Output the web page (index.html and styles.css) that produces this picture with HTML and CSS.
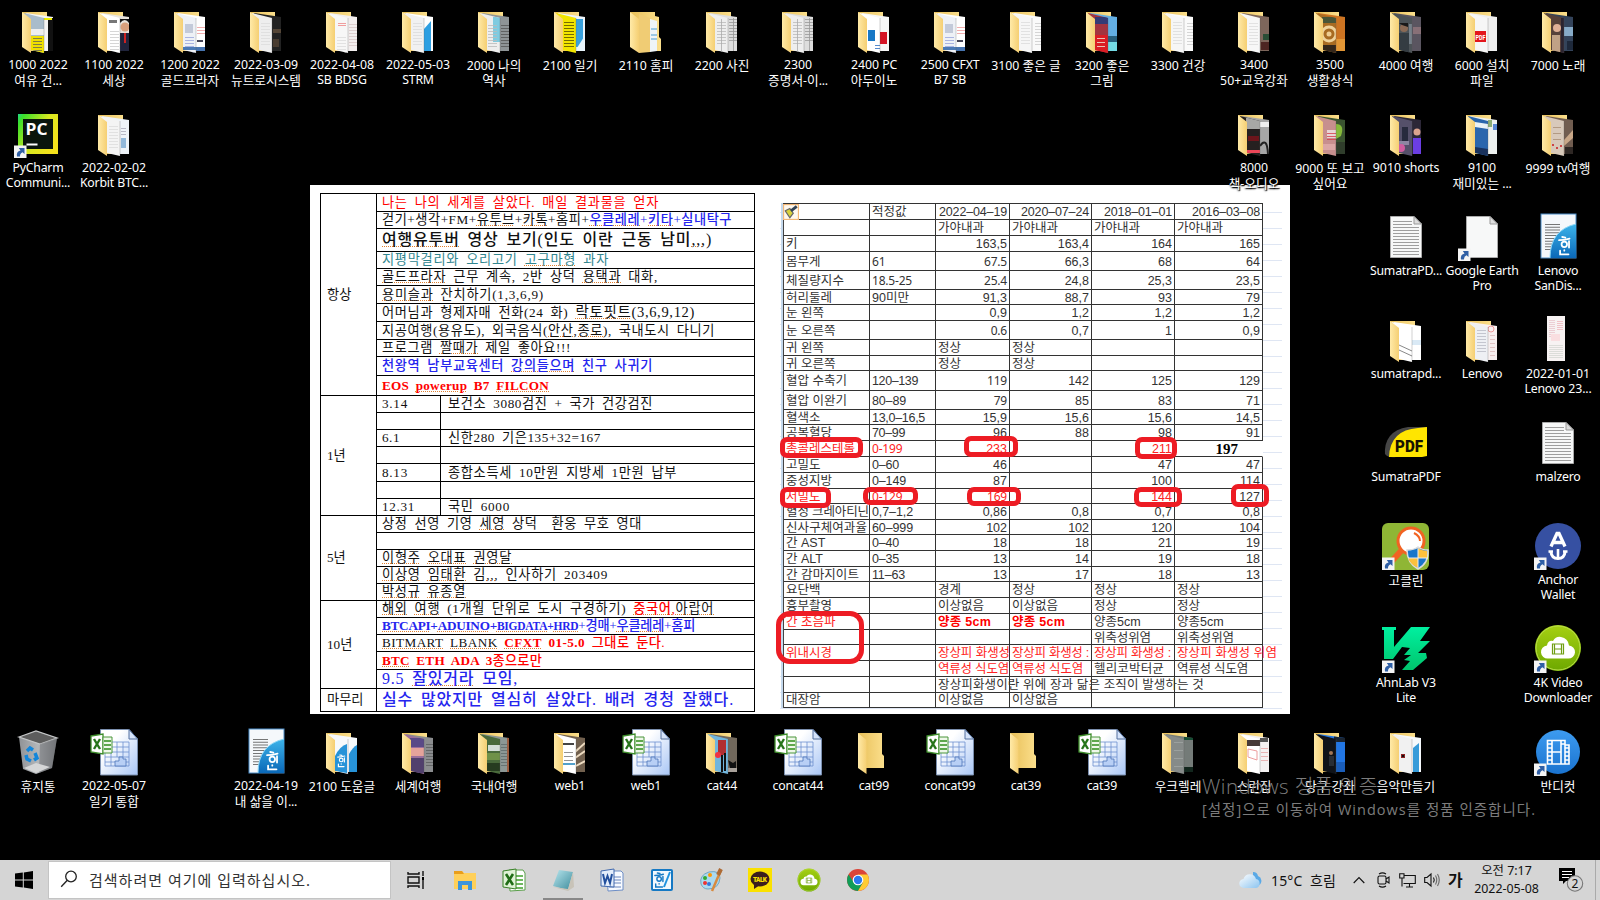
FILE: index.html
```html
<!DOCTYPE html>
<html lang="ko">
<head>
<meta charset="utf-8">
<title>바탕 화면</title>
<link rel="stylesheet" href="styles.css">
</head>
<body>
<div class="screen">
  <div class="wallpaper">
    <div class="plan" id="plan"></div>
    <div class="sheet-wrap">
      <div class="sheet" id="sheet"></div>
      <div class="marks" id="marks"></div>
    </div>
  </div>
  <div class="desktop" id="desktop"></div>
  <div class="watermark">
    <div class="wm-title"><span data-w="176">Windows 정품 인증</span></div>
    <div class="wm-sub"><span data-w="334">[설정]으로 이동하여 Windows를 정품 인증합니다.</span></div>
  </div>
  <div class="taskbar">
    <div class="start"><svg width="18" height="18" viewBox="0 0 18 18"><path d="M0 2.6 7.8 1.5V8.5H0ZM8.8 1.4 18 0V8.5H8.8ZM0 9.5H7.8V16.5L0 15.4ZM8.8 9.5H18V18L8.8 16.6Z"/></svg></div>
    <div class="search">
      <svg width="18" height="18" viewBox="0 0 18 18"><circle cx="11" cy="6.5" r="5.3"/><path d="M7.3 10.3 1.2 16.8"/></svg>
      <span data-w="222">검색하려면 여기에 입력하십시오.</span>
    </div>
    <div class="apps" id="apps"></div>
    <div class="tray">
      <svg class="cloud" width="23" height="18" viewBox="0 0 23 18"><defs><linearGradient id="cl" x1="0" y1="0" x2="1" y2="1"><stop offset="0" stop-color="#fff"/><stop offset="1" stop-color="#8cc4f0"/></linearGradient></defs><path d="M14 1a5 5 0 0 1 5 4 5 5 0 0 1 1 9h-6Z" fill="#5aa9e6"/><path d="M5 17a4.500 4.500 0 0 1-.5-9 6.500 6.500 0 0 1 12.500 0 4.600 4.600 0 0 1 0 9Z" fill="url(#cl)"/></svg>
      <span class="weather"><span data-w="65">15°C&nbsp; 흐림</span></span>
      <svg class="chev" width="12" height="8" viewBox="0 0 12 8"><path d="M.7 7 6 1.500 11.300 7"/></svg>
      <svg class="cam" width="13" height="16" viewBox="0 0 13 16"><path d="M2 2Q5.500-.3 9 2M2 14Q5.500 16.300 9 14"/><rect x="1" y="4" width="8" height="8" rx="1.500"/><path d="M9 7 12 5V11L9 9"/></svg>
      <svg class="net" width="17" height="15" viewBox="0 0 17 15"><path d="M5.500 2.500H16.300V10.500H4.500M10.500 10.500V14M7 14H14M.7.700H5V5H.7ZM3 5V13.500"/></svg>
      <svg class="vol" width="17" height="14" viewBox="0 0 17 14"><path d="M.7 4.500H3L7 1V13L3 9.500H.7Z"/><path d="M9.500 4.500Q11 7 9.500 9.500"/><path d="M11.500 2.500Q14 7 11.500 11.500M13.500 1Q17 7 13.500 13" opacity=".55"/></svg>
      <span class="ime">가</span>
      <span class="clock"><span>오전 7:17</span><span>2022-05-08</span></span>
      <svg class="note" width="25" height="26" viewBox="0 0 25 26"><path d="M0 1H16V14H7L4 17V14H0Z" fill="#000"/><path d="M3 4.500H13M3 7.500H13M3 10.500H10" stroke="#fff"/><circle cx="16" cy="16.500" r="7.700" fill="#d5d5d5" stroke="#777"/><text x="16" y="21" text-anchor="middle" font-size="12" font-family="Noto Sans" fill="#111">2</text></svg>
      <span class="peek"></span>
    </div>
  </div>
</div>
<script src="app.js"></script>
</body>
</html>
```

FILE: styles.css
```css
* { box-sizing: border-box; }
body { margin: 0; background: #000; font-family: "Noto Sans", "Noto Sans CJK KR", sans-serif; }
.screen { position: relative; width: 1600px; height: 900px; overflow: hidden; display: flex; flex-direction: column; background: #000; }

/* desktop icons */
.desktop { position: relative; flex: 1; display: grid; grid-template-columns: repeat(21, 76px); grid-template-rows: repeat(8, 103px); padding-top: 9px; }
.item { display: flex; flex-direction: column; align-items: center; color: #fff; min-width: 0; }
.item svg { display: block; overflow: visible; }
.label { text-align: center; white-space: nowrap; font-size: 12.3px; line-height: 15px; text-shadow: 0 1px 2px #000, 1px 1px 1px #000; }
.label div { height: 15px; }
.ko { font-family: "Noto Sans CJK KR", sans-serif; font-size: 12.7px; }
.en { letter-spacing: -.22px; }

/* wallpaper picture */
.wallpaper { position: absolute; left: 310px; top: 185px; width: 980px; height: 529px; background: #fff; display: flex; align-items: flex-start; color: #111; }
.plan { margin: 8px 0 0 10px; width: 435px; border: 1px solid #000; border-bottom: 0; flex: none; font-family: "Liberation Serif", "Noto Sans CJK KR", serif; font-size: 13.2px; }
.group { display: grid; grid-template-columns: 56px 1fr; }
.gname { display: flex; align-items: center; padding: 0 0 3px 6px; border-right: 1px solid #000; border-bottom: 1px solid #000; }
.prow { display: flex; border-bottom: 1px solid #000; overflow: hidden; white-space: nowrap; word-spacing: 3px; }
.prow > div { padding: 0 0 1px 5px; display: flex; align-items: center; line-height: 15px; height: 100%; }
.prow > .when { width: 64px; border-right: 1px solid #000; }
.prow > .what { padding-left: 7px; }
.plan .sq { text-decoration: underline dotted #e08030 1px; text-underline-offset: 1px; }
.red { color: #f00; }
.blue { color: #2525ee; }
.teal { color: #31868f; }
.b { font-weight: 500; }
.bb { font-weight: 700; }
.s11 { font-size: 11.5px; }
.s14 { font-size: 14.5px; }
.s16 { font-size: 16px; }

.sheet-wrap { position: relative; margin: 12px 0 0 25px; width: 502px; height: 513px; padding: 6px 0 0 3px; background: repeating-linear-gradient(#fff 0 15px, #dfe6f3 15px 16px); }
.sheet { width: 480px; border-left: 1px solid #444; border-top: 1px solid #333; background: #fff; font-family: "Liberation Sans", "Noto Sans CJK KR", sans-serif; font-size: 12.5px; color: #333; box-shadow: -2px 0 #c5d9ed; }
.srow { display: grid; grid-template-columns: 86px 66px 74px 82px 83px 88px; }
.cell { border-right: 1px solid #333; border-bottom: 1px solid #333; display: flex; align-items: center; line-height: 14px; overflow: hidden; white-space: nowrap; padding: 1px 2px 0; min-width: 0; }
.cell.num { justify-content: flex-end; }
.cell.spill { overflow: visible; }
.cell.mal { font-family: "Noto Sans", sans-serif; font-size: 12px; letter-spacing: -.2px; }
.cell.hot { color: #f22; }
.cell.bold { color: #f00; font-weight: 700; }
.cell.patch { border-right-color: #fff; font: 700 15px "Liberation Serif", serif; color: #000; padding-right: 24px; }
.dash { display: inline-block; width: 7px; height: 1px; margin: 0 .5px; background: currentColor; vertical-align: 4px; color: inherit; overflow: hidden; }
.marks i { position: absolute; border: 4.500px solid #ed1c24; border-width: 5px; border-radius: 7px; }
.marks i.big { border-radius: 14px; }
.marks svg { position: absolute; left: 3px; top: 7px; }

/* activation notice */
.watermark { position: absolute; left: 1202px; top: 771px; color: #8a8a8a; opacity: .9; white-space: nowrap; font-family: "Open Sans", "Noto Sans CJK KR", sans-serif; }
.wm-title { font-size: 20.5px; line-height: 30px; font-weight: 300; }
.wm-sub { font-size: 14.5px; line-height: 18px; }

/* taskbar */
.taskbar { position: relative; height: 40px; flex: none; display: flex; background: #d5d5d5; color: #111; }
.start { width: 48px; display: flex; align-items: center; justify-content: center; }
.search { width: 343px; margin: 1px 0; background: #fff; border: 1px solid #c4c4c4; display: flex; align-items: center; padding: 0 0 2px 11px; gap: 11px; font-size: 15px; color: #333; white-space: nowrap; }
.search svg { fill: none; stroke: #222; stroke-width: 1.3; }
.apps { display: flex; }
.app { width: 49.2px; display: flex; align-items: center; justify-content: center; }
.app.on { background: linear-gradient(#888, #888) center bottom / 40px 2px no-repeat; }
.tray { margin-left: auto; display: flex; align-items: center; height: 40px; }
.tray svg { flex: none; fill: none; stroke: #111; stroke-width: 1.1; overflow: visible; }
.tray .cloud, .tray .note { stroke: none; }
.weather { margin-left: 9px; width: 82px; font-size: 14px; white-space: nowrap; }
.cam { margin-left: 12px; }
.net { margin-left: 9px; }
.vol { margin-left: 8px; }
.ime { margin-left: 7px; width: 17px; font: 700 16px/20px "Noto Sans CJK KR", sans-serif; padding-bottom: 2px; }
.clock { width: 67px; margin-left: 8px; display: flex; flex-direction: column; align-items: center; font-size: 12.4px; line-height: 18px; white-space: nowrap; }
.note { margin-left: 19px; }
.peek { width: 1px; height: 40px; background: #aaa; margin: 0 4px 0 11px; }
```

FILE: app.js
```js
const S = (body, w = 48, h = 48, vb = '0 0 48 48') => `<svg width="${w}" height="${h}" viewBox="${vb}">${body}</svg>`;
const R = (x, y, w, h, c) => `<rect x="${x}" y="${y}" width="${w}" height="${h}" fill="${c}"/>`;
const lines = (x, y, w, n, step, c) => Array.from({ length: n }, (_, i) => R(x, y + i * step, w, .8, c)).join('');
const arrow = R(0, 33.500, 12.500, 12.500, '#f4f4f4') + '<path d="M3 44.500Q2 39.500 6.500 38.500L4.800 36H10.500V42L8.500 40.300Q5.800 41.500 6 44.500Z" fill="#2f5fa5"/>';

document.body.insertAdjacentHTML('afterbegin', `<svg width="0" height="0" style="position:absolute"><defs>
<linearGradient id="fl" x1="0" x2="1"><stop offset="0" stop-color="#ffeaa8"/><stop offset="1" stop-color="#f5cf73"/></linearGradient>
<linearGradient id="bk" x1="0" x2="1"><stop offset="0" stop-color="#e8bf58"/><stop offset="1" stop-color="#fbdf8c"/></linearGradient>
<linearGradient id="hw" x1="0" x2="0" y2="1"><stop offset="0" stop-color="#3db4ea"/><stop offset="1" stop-color="#0a68b8"/></linearGradient>
<linearGradient id="xl" x1="0" y1="0" x2="1" y2="1"><stop offset=".3" stop-color="#fff"/><stop offset="1" stop-color="#a9c6f5"/></linearGradient>
<linearGradient id="pc" x1="0" x2="1" y2=".6"><stop offset="0" stop-color="#21d789"/><stop offset=".12" stop-color="#3be02a"/><stop offset=".6" stop-color="#d8e820"/><stop offset="1" stop-color="#f4e21c"/></linearGradient>
<linearGradient id="v3" x1="0" x2="0" y2="1"><stop offset="0" stop-color="#00f0a0"/><stop offset="1" stop-color="#00c56c"/></linearGradient>
<linearGradient id="gr" x1="0" x2="0" y2="1"><stop offset="0" stop-color="#a6d013"/><stop offset="1" stop-color="#6da800"/></linearGradient>
<linearGradient id="bl" x1="0" x2="0" y2="1"><stop offset="0" stop-color="#3d9bf0"/><stop offset="1" stop-color="#1a73cf"/></linearGradient>
<linearGradient id="bn" x1="0" x2="1"><stop offset="0" stop-color="#8f9296"/><stop offset=".5" stop-color="#b4b7ba"/><stop offset="1" stop-color="#77797c"/></linearGradient>
<linearGradient id="np" x1="0" x2="1" y2="1"><stop offset="0" stop-color="#b9e6ee"/><stop offset="1" stop-color="#3d8c9c"/></linearGradient>
<clipPath id="p1"><path d="M10 4 30 9V44L17 41Z"/></clipPath><clipPath id="p2"><path d="M17 5 39 8V42H28Z"/></clipPath></defs></svg>`);

// Folder with two sheets sticking out; e1/e2 hold the drawing on each sheet.
const folder = (c1, e1 = '', c2 = '#f2f2f2', e2 = '') => S(
  `<path d="M8 3H33V42H17Z" fill="url(#bk)"/><path d="M12 4 39 8V42H24Z" fill="${c2}"/><g clip-path="url(#p2)">${e2}</g>
   <path d="M10 4 30 9V44L17 41Z" fill="${c1}"/><g clip-path="url(#p1)">${e1}</g><path d="M30 9V44" stroke="#555" stroke-opacity=".4" stroke-width=".7"/>
   <path d="M8 3 17 10V44L8 38Z" fill="url(#fl)"/>`);
const empty = S('<path d="M8 3H32V24L34 26V38H16Z" fill="url(#bk)"/><path d="M8 3 16.500 10V44L8 38Z" fill="url(#fl)"/>');
const gray = (x, y = 13, c = '#aaa') => lines(x, y, 9, 8, 3, c);
const sheets = folder('#f6f6f6', gray(19, 13, '#ddd'), '#fafafa', gray(33, 14, '#ccc'));
const han = (x, y, s, c = '#fff') => `<g transform="translate(${x} ${y}) scale(${s})" fill="none" stroke="${c}" stroke-width="1.700" stroke-linecap="round"><path d="M4 0 7 .5M1 3Q6 3 11 1.500"/><circle cx="6" cy="7" r="2.600"/><path d="M10.500 4V10M2 13V16.500H10M6 12.500V13"/></g>`;
const hwp = S(R(7, -1, 35, 44, '#f5f8fb') + `<rect x="7" y="-1" width="35" height="44" fill="none" stroke="#4a8cc7"/>` + lines(11, 9, 15, 10, 2.800, '#555') +
  `<path d="M16 43Q16 15 42 9V43Z" fill="url(#hw)"/><path d="M16 43Q16 15 42 9" fill="none" stroke="#8bd6f6"/>` + han(24, 22, 1.050));
const page = (l) => `<path d="M8.500 1.500H32L39.500 9V42.500H8.500Z" fill="#f7f8f8" stroke="#aaa"/><path d="M32 1.500V9H39.500Z" fill="#ddd" stroke="#999"/>` + (l ? lines(11, 6, 19, 1, 3, '#888') + lines(11, 9, 19, 1, 3, '#888') + lines(11, 12, 26, 10, 3, '#888') : '');
const excel = S(`<path d="M10.500-.5H39L47.500 9V45H10.500Z" fill="url(#xl)" stroke="#7b8fae"/><path d="M39-.5V9H47.500Z" fill="#d5e3fa" stroke="#54719f"/>
 <path d="M15 12H39V36H15ZM15 17H39M15 22H39M15 27H39M15 32H39M21 12V36M27 12V27M33 12V27" fill="none" stroke="#6d91cf" stroke-width=".8"/><path d="M25 36V31H29V27H33V29H36V36Z" fill="#b8cff5" stroke="#4d74b8" stroke-width=".8"/>
 <path d="M1 6 13 4V24L1 22Z" fill="#fff" stroke="#3d8c2a" stroke-width="1.300"/><path d="M13 7H22V23H13Z" fill="#eef7e9" stroke="#4b963a"/><path d="M14 11H21M14 15H21M14 19H21" stroke="#5da74c" stroke-width="2"/><path d="M4 9 10 19M10 9 4 19" stroke="#27751a" stroke-width="2.400"/>`);
const cloud4k = `<circle cx="24" cy="21" r="23" fill="url(#gr)"/><circle cx="24" cy="21" r="22" fill="none" stroke="#b9dd4b"/><path d="M14 31.500A6.500 6.500 0 0 1 13 18.500Q14 13 19 14Q22 9 27 10Q34 11 35 18.500A6.500 6.500 0 0 1 34 31.500Z" fill="#fff"/><path d="M18.500 17H29.500V27H18.500ZM20.500 17V27M27.500 17V27M20.500 22H27.500" fill="none" stroke="#6f9e12" stroke-width="1.200"/>`;

const I = {
  f1000: folder('#a9bccb', R(16, 20, 14, 6, '#eee') + R(17, 27, 13, 18, '#f0e000') + lines(19, 29, 9, 5, 3, '#665'), '#f4f4f4', R(34, 9, 6, 34, '#111') + R(30, 9, 8, 2, '#ee0')),
  f1100: folder('#fff', R(19, 11, 8, 3, '#777') + gray(20, 22, '#ccc'), '#e8e4dd', '<circle cx="35" cy="18" r="4.500" fill="#d9a07c"/><path d="M30 14Q35 8 39 14V10H30Z" fill="#111"/>' + R(30, 24, 10, 20, '#20243c') + R(34, 24, 2, 10, '#c22')),
  f1200: folder('#eef1f6', R(19, 15, 8, 9, '#c3cad9') + gray(19, 28, '#99a5dd') + R(17, 38, 14, 3, '#4c7ab5'), '#fff', lines(31, 18, 8, 3, 3, '#e99') + R(31, 31, 6, 2, '#445') + R(30, 38, 9, 4, '#4774b0')),
  f0309: folder('#eee', gray(19, 14, '#ddd'), '#222', R(31, 20, 8, 4, '#554637') + R(31, 30, 6, 8, '#493c30')),
  f0408: folder('#f7f7f7', lines(20, 14, 8, 2, 2, '#e88') + gray(19, 28, '#ddd'), '#f2eeee', lines(31, 15, 8, 8, 3, '#d6c6c6')),
  f0503: folder('#f1f1f1', gray(19, 14, '#ddd'), '#fff', '<path d="M30 42V20L37 12V42Z" fill="#2d9fe2"/>'),
  f2000: folder('#eee', R(23, 8, 8, 25, '#7fcbe0') + gray(18, 16, '#bbb'), '#8e9496', gray(31, 16, '#555')),
  f2100: folder('#f3e600', lines(18, 13, 10, 9, 3, '#554c00'), '#eef5fb', R(29, 10, 8, 28, '#39a1dd') + '<path d="M29 42 38 28V42Z" fill="#e8f5fc"/>'),
  f2110: S('<path d="M8 3H33V7L37 8V28L39 30V42H18Z" fill="url(#bk)"/><path d="M28 10 35 12V42L28 43Z" fill="#eef4f8"/><path d="M29 20H35M29 26H35M29 30H35" stroke="#4a9cd0"/><path d="M17 5 28 9V43L17 44Z" fill="#f0cc74"/><path d="M8 3 17 10V44L8 38Z" fill="url(#fl)"/>'),
  f2200: folder('#eee', gray(19, 13, '#bbb') + R(23, 10, .8, 34, '#aaa'), '#ddd', gray(31, 10, '#999') + R(35, 9, .8, 33, '#999')),
  f2400: folder('#fff', R(18, 21, 7, 11, '#1878c6') + lines(25, 36, 5, 2, 3, '#2a6dc0'), '#f6f6f6', R(30, 23, 7, 12, '#d51425')),
  f3200: folder('#a23440', R(17, 8, 13, 7, '#333b76') + R(17, 26, 13, 18, '#db1c24') + lines(19, 29, 8, 3, 4, '#eed'), '#63aee2', R(29, 27, 10, 6, '#285f7c') + R(29, 33, 10, 10, '#74dbe5')),
  f3400: folder('#f7f7f7', gray(19, 14, '#ddd'), '#7d665b', R(33, 25, 6, 6, '#294d35') + R(31, 33, 8, 8, '#4d2522')),
  f3500: folder('#a86b22', '<circle cx="23" cy="25" r="7" fill="none" stroke="#efd29b" stroke-width="3"/><circle cx="23" cy="25" r="2.500" fill="#eecd92"/>' + R(16, 36, 14, 8, '#33261a') + R(16, 8, 14, 6, '#495537'), '#cd7422', R(30, 30, 9, 12, '#e29635')),
  f4000: folder('#4c5357', '<circle cx="22" cy="19" r="4" fill="#8a6a55"/><path d="M17 14H26V18L20 16Z" fill="#191919"/>' + R(17, 24, 10, 20, '#343c42') + R(27, 15, 3, 20, '#76818a'), '#5a5560', R(31, 18, 8, 7, '#887077')),
  f6000: folder('#f6f6f6', R(17, 22, 11, 11, '#e3161c') + '<text x="17.500" y="31" font-size="7" font-family="Roboto" font-weight="700" fill="#fff" textLength="10" lengthAdjust="spacingAndGlyphs">PDF</text>', '#eee'),
  f7000: folder('#57413a', '<circle cx="23" cy="19" r="4" fill="#dfaf96"/>' + R(18, 26, 8, 18, '#c0a186') + R(27, 9, 3, 35, '#2b2430'), '#33435a', R(30, 18, 9, 9, '#87abc8') + R(33, 32, 6, 9, '#1e293b')),
  f8000: folder('#252020', R(16, 6, 14, 11, '#a7a7a5') + R(18, 24, 11, 5, '#6d151b') + R(17, 38, 13, 3, '#ec4658'), '#a6a6a6', '<path d="M30 34Q37 24 38 42" fill="none" stroke="#222" stroke-width="2"/>' + R(30, 10, 9, 5, '#eee')),
  f9000: folder('#c78f8e', R(21, 18, 9, 8, '#e8d5d5') + lines(21, 21, 9, 3, 3, '#d63f4a') + R(17, 32, 12, 6, '#dba7a5'), '#3a5430', '<path d="M30 12Q39 12 35 24L30 27Z" fill="#86ba3a"/>' + R(30, 30, 9, 12, '#2f3d2b')),
  f9010: folder('#55506a', R(20, 15, 6, 14, '#272a3d') + R(17, 29, 10, 4, '#8d86a2') + '<circle cx="19" cy="36" r="4" fill="#d05da0"/>', '#2c2737', '<circle cx="35" cy="20" r="3.500" fill="#dba38e"/>' + R(31, 26, 8, 17, '#6b3ee3')),
  f9100: folder('#2a66ad', '<path d="M17 10 30 12V17L17 15Z" fill="#e9f1f5"/><path d="M17 35 30 37V44L17 41Z" fill="#19325d"/>', '#edf1ef', R(30, 8, 4, 7, '#8cae77') + R(35, 12, 4, 6, '#5886d3')),
  f9999: folder('#d8c9ba', lines(19, 15, 8, 3, 6, '#a98f76') + R(18, 32, 2, 2, '#c44') + R(22, 35, 2, 2, '#c44') + R(26, 33, 2, 2, '#c44'), '#715d50', '<path d="M30 28 39 18V26L30 34Z" fill="#c8a788"/>' + R(31, 35, 8, 8, '#2e2724')),
  korbit: folder('#f4f4f4', gray(19, 14, '#ddd'), '#eef3f8', R(31, 26, 5, 10, '#92b8da') + lines(31, 16, 5, 3, 3, '#aab')),
  spd: folder('#fff', '<path d="M17 27 30 33M17 32 30 38" stroke="#888"/>', '#fff', R(30, 22, 9, 5, '#d9e9f5')),
  lenovo: folder('#eef0f4', gray(19, 12, '#b9bcc6'), '#f8f0f0', '<circle cx="33" cy="11" r="3" fill="none" stroke="#e99"/>' + lines(32, 17, 5, 6, 4, '#dbb')),
  help: folder('#f6f9fc', '<path d="M17 41V26Q22 16 29 14V43Z" fill="#2793d8"/>' + han(19, 25, .7), '#f6f9fc', '<path d="M31 42V24Q35 17 39 15V42Z" fill="#2793d8"/>'),
  world: folder('#9b6f9c', R(16, 8, 14, 9, '#5a4a87') + '<path d="M16 18H30V26H16Z" fill="#e5a39b"/>' + R(16, 28, 14, 15, '#51406d'), '#8b8d8f', gray(32, 14, '#5d5f60')),
  korea: folder('#496a3b', R(18, 15, 12, 6, '#d3ded7') + R(16, 23, 14, 7, '#6f9148') + R(17, 33, 13, 8, '#263c20'), '#8c9795', gray(31, 14, '#5f6c6c') + R(37, 8, 3, 35, '#9b5c40')),
  web: folder('#fff', R(17, 13, 11, 2, '#444') + lines(18, 22, 9, 3, 4, '#777') + R(17, 33, 12, 2, '#53a0cb'), '#71604e', '<path d="M29 22 39 13M29 28 39 21M30 36 39 31" stroke="#ecdac0" stroke-width="2"/>'),
  cat: folder('#71b5dd', R(20, 10, 8, 15, '#b02f32') + R(23, 25, 2, 17, '#111') + R(26, 23, 2, 18, '#111') + '<circle cx="20" cy="25" r="3" fill="#ef3144"/>', '#71685c', '<path d="M30 30 35 33 38 31V38H32Z" fill="#111"/>' + R(29, 38, 10, 4, '#a9a29b')),
  uke: folder('#868b89', lines(20, 12, 9, 4, 8, '#a1a6a4'), '#747b78', R(30, 7, 9, 3, '#174d34') + R(30, 37, 9, 5, '#12261d')),
  score: folder('#fff', R(17, 10, 13, 6, '#463a38') + '<path d="M18 19 27 21V30L18 27Z" fill="none" stroke="#ed9e9e"/>', '#f4f1f1', lines(31, 18, 7, 4, 4, '#e7a6a6') + R(30, 8, 8, 4, '#555')),
  pool: folder('#101318', '<circle cx="25" cy="23" r="2" fill="#a17656"/>' + R(23, 26, 5, 10, '#292e35'), '#2276e3', R(28, 4, 11, 8, '#1a2431') + R(30, 32, 9, 10, '#1a5db9')),
  music: folder('#f1f1f1', R(19, 24, 4, 4, '#8c2222') + R(20, 25, 2, 2, '#111'), '#f5f9fc', '<path d="M31 42V18L37 13V42Z" fill="#369bd9"/>'),
  sheets, empty, excel, hwp,
  txt: S(page(1)), earth: S(page(0) + arrow),
  shot: S(R(13, -2, 18, 45, '#f7f2f2') + lines(15, 2, 6, 9, 2, '#e9c5cc') + lines(23, 3, 6, 5, 2, '#efb5bc') + R(17, 16, 9, 7, '#f9dee0') + lines(15, 27, 14, 7, 2, '#d5d8d2')),
  pycharm: S(`<rect x="4" y="2" width="40" height="40" fill="url(#pc)"/><rect x="9" y="7" width="30" height="30" fill="#0a150c"/><text x="11.500" y="22.500" font-family="Open Sans" font-weight="700" font-size="15.500" fill="#fff" textLength="22" lengthAdjust="spacingAndGlyphs">PC</text>` + R(12.500, 31.500, 11, 2, '#fff') + arrow),
  sumatra: S(`<path d="M3 35Q1 10 26 6L44 6V12L14 36Q6 37 3 33Z" fill="#454545"/><path d="M7 36Q8 9 36 7L45 6V35L40 36Z" fill="#ffe500"/><text x="13" y="31" font-family="Roboto" font-weight="900" font-size="17" textLength="28" lengthAdjust="spacingAndGlyphs" fill="#171300">PDF</text>`),
  goclean: S(`<rect y="-1" width="47" height="47" rx="6" fill="#8fb635"/><path d="M19 27 9 38" stroke="#f26322" stroke-width="6"/><circle cx="29" cy="17" r="13" fill="#fff" stroke="#f26322" stroke-width="3"/><path d="M32 9Q38 12 38 17" fill="none" stroke="#f26322" stroke-width="2"/><path d="M25 26Q32 26 36 23Q40 26 46 26Q47 39 36 45Q25 39 25 26Z" fill="#1976ca" stroke="#ddd" stroke-width="1.500"/><path d="M36 24Q40 27 45 27V34H36ZM26 34H36V44Q28 40 26 34Z" fill="#fcc13c"/><path d="M36 24V44M26 34H46" stroke="#eee"/>` + arrow),
  anchor: S('<circle cx="24" cy="22" r="23" fill="#3650a2"/><g fill="none" stroke="#fff"><path d="M17 22.500 23 9.500H25L31 22.500M20 18.500H28" stroke-width="3.300"/><path d="M24 25V34M14.500 27.500H19M29 27.500H33.500" stroke-width="2.600"/><path d="M17 28Q17.500 34.500 24 34.500Q30.500 34.500 31 28" stroke-width="3"/></g>' + arrow),
  v3: S('<path d="M0 0H14V3H12V20L29 0H48L38 14H48L36 26H44L45 31L31 43H20L28 34L22 33L29 28H22L28 21L20 20L11 32H2V3H0Z" fill="url(#v3)"/>' + arrow),
  k4: S(cloud4k + arrow),
  bandi: S('<circle cx="24" cy="22" r="22" fill="url(#bl)"/><g fill="none" stroke="#fff" stroke-width="1.600"><path d="M13.500 10.500H31V34H13.500ZM18 10.500V34M27 10.500V34M18 22H27M31 15H35V34H31M13.500 14H18M13.500 18H18M13.500 22H18M13.500 26H18M13.500 30H18M27 14H31M31 18H35M31 22H35M31 26H35M31 30H35"/></g>' + arrow),
  bin: S('<path d="M5 7 22 1 43 8 38 38 22 44 9 39Z" fill="url(#bn)"/><path d="M5 7 22 1 43 8 26 14Z" fill="#5d5d5d" stroke="#c3c5c6" stroke-width="1.300"/><path d="M26 14 25 43 38 38 43 8Z" fill="#6d7073" opacity=".5"/><path d="M10 38 22 33 36 37 22 43Z" fill="#d5d6d7"/><g fill="none" stroke="#1386da" stroke-width="3.500"><path d="M13 21 16 18 19 20M21 23 23 28 20 30M17 31 13 29 12 25"/></g>')
};

const grid = [
  [0, 0, 'f1000', '1000 2022|여유 건...'], [0, 1, 'f1100', '1100 2022|세상'], [0, 2, 'f1200', '1200 2022|골드프라자'], [0, 3, 'f0309', '2022-03-09|뉴트로시스템'],
  [0, 4, 'f0408', '2022-04-08|SB BDSG'], [0, 5, 'f0503', '2022-05-03|STRM'], [0, 6, 'f2000', '2000 나의|역사'], [0, 7, 'f2100', '2100 일기'], [0, 8, 'f2110', '2110 홈피'],
  [0, 9, 'f2200', '2200 사진'], [0, 10, 'f2200', '2300|증명서-이...'], [0, 11, 'f2400', '2400 PC|아두이노'], [0, 12, 'f1200', '2500 CFXT|B7 SB'], [0, 13, 'sheets', '3100 좋은 글'],
  [0, 14, 'f3200', '3200 좋은|그림'], [0, 15, 'sheets', '3300 건강'], [0, 16, 'f3400', '3400|50+교육강좌'], [0, 17, 'f3500', '3500|생활상식'], [0, 18, 'f4000', '4000 여행'], [0, 19, 'f6000', '6000 설치|파일'], [0, 20, 'f7000', '7000 노래'],
  [1, 0, 'pycharm', 'PyCharm|Communi...'], [1, 1, 'korbit', '2022-02-02|Korbit BTC...'], [1, 16, 'f8000', '8000|책-오디오'], [1, 17, 'f9000', '9000 또 보고|싶어요'], [1, 18, 'f9010', '9010 shorts'], [1, 19, 'f9100', '9100|재미있는 ...'], [1, 20, 'f9999', '9999 tv여행'],
  [2, 18, 'txt', 'SumatraPD...'], [2, 19, 'earth', 'Google Earth|Pro'], [2, 20, 'hwp', 'Lenovo|SanDis...'],
  [3, 18, 'spd', 'sumatrapd...'], [3, 19, 'lenovo', 'Lenovo'], [3, 20, 'shot', '2022-01-01|Lenovo 23...'],
  [4, 18, 'sumatra', 'SumatraPDF'], [4, 20, 'txt', 'malzero'],
  [5, 18, 'goclean', '고클린'], [5, 20, 'anchor', 'Anchor|Wallet'], [6, 18, 'v3', 'AhnLab V3|Lite'], [6, 20, 'k4', '4K Video|Downloader'],
  [7, 0, 'bin', '휴지통'], [7, 1, 'excel', '2022-05-07|일기 통합'], [7, 3, 'hwp', '2022-04-19|내 삶을 이...'], [7, 4, 'help', '2100 도움글'], [7, 5, 'world', '세계여행'], [7, 6, 'korea', '국내여행'],
  [7, 7, 'web', 'web1'], [7, 8, 'excel', 'web1'], [7, 9, 'cat', 'cat44'], [7, 10, 'excel', 'concat44'], [7, 11, 'empty', 'cat99'], [7, 12, 'excel', 'concat99'], [7, 13, 'empty', 'cat39'], [7, 14, 'excel', 'cat39'],
  [7, 15, 'uke', '우크렐레'], [7, 16, 'score', '스린집'], [7, 17, 'pool', '당구 강좌'], [7, 18, 'music', '음악만들기'], [7, 20, 'bandi', '반디컷']
];
desktop.innerHTML = grid.map(([r, c, i, t]) => `<div class="item" style="grid-area:${r + 1}/${c + 1}">${I[i]}<div class="label">${
  t.split('|').map(l => `<div>${l.replace(/[가-힣]+|[A-Za-z.]+/g, m => `<span class="${m > '가' ? 'ko' : 'en'}">${m}</span>`)}</div>`).join('')}</div></div>`).join('');

// Plan table: [row height, text width, markup] or [row height, width, date, width, markup]
const q = s => `<span class="sq">${s}</span>`;
const c = (k, s) => `<span class="${k}">${s}</span>`;
const groups = [
  ['항상', [
    [18, 277, c('red', '나는 나의 세계를 살았다. 매일 결과물을 얻자')],
    [17, 350, '걷기+생각+FM+' + q('유투브') + '+' + q('카톡') + '+홈피+' + c('blue b', q('우클레레') + '+' + q('키타') + '+실내탁구')],
    [23, 330, c('s16 b', q('여행유투버') + ' 영상 보기(인도 이란 근동 남미' + q(',,,') + ')')],
    [17, 227, c('teal', '지평막걸리와 오리고기 ' + q('고구마형') + ' 과자')],
    [17, 276, q('골드프라자') + ' 근무 계속, 2반 상덕 ' + q('용택과') + ' 대화,'],
    [18, 162, q('용미슬과') + ' 잔치하기(1,3,6,9)'],
    [18, 313, '어머님과 형제자매 전화(24 화) ' + c('s14', q('락토핏트') + '(3,6,9,12)')],
    [18, 333, '지공여행(용유도), 외국음식(' + q('안산,종로') + '), 국내도시 다니기'],
    [17, 189, '프로그램 ' + q('짤때가') + ' 제일 좋아요!!!'],
    [19, 271, c('blue b', '천왕역 남부교육센터 ' + q('강의들으며') + ' 친구 사귀기')],
    [20, 167, c('red bb', 'EOS ' + q('powerup') + ' B7 ' + q('FILCON'))]]],
  ['1년', [
    [17, 26, '3.14', 205, '보건소 3080검진 + 국가 건강검진'], [17, 0, '', 0, ''], [17, 18, '6.1', 153, '신한280 기은135+32=167'], [17, 0, '', 0, ''],
    [18, 26, '8.13', 229, '종합소득세 10만원 지방세 1만원 납부'], [17, 0, '', 0, ''], [17, 33, '12.31', 62, '국민 6000']]],
  ['5년', [
    [17, 260, '상정 선영 기영 ' + q('세영') + ' 상덕&nbsp; 환웅 무호 영대'], [17, 0, ''],
    [17, 130, q('이형주') + ' ' + q('오대표') + ' ' + q('권영달')],
    [17, 226, q('이상영') + ' ' + q('임태환') + ' 김' + q(',,,') + ' 인사하기 203409'],
    [17, 84, q('박성규') + ' ' + q('유종열')]]],
  ['10년', [
    [17, 332, q('해외') + ' ' + q('여행') + ' (1개월 단위로 도시 구경하기) ' + c('red b', q('중국어,')) + q('아랍어')],
    [17, 313, c('blue b', c('bb', q('BTCAPI') + '+' + q('ADUINO') + '+' + c('s11', q('BIGDATA') + '+' + q('HRD'))) + '+경매+' + q('우클레레') + '+홈피')],
    [17, 283, q('BITMART') + ' ' + q('LBANK') + ' ' + c('red b', c('bb', q('CFXT') + ' 01-5.0') + ' 그대로 둔다.')],
    [18, 160, c('red b', c('bb', q('BTC') + ' ETH ADA 3') + '종으로만')],
    [19, 136, c('blue b s16', '9.5 ' + q('잘있거라') + ' 모임,')]]],
  ['마무리', [[23, 352, c('blue b s16', '실수 많았지만 열심히 살았다. 배려 경청 잘했다.')]]]
];
plan.innerHTML = groups.map(([n, rows]) => `<div class="group"><div class="gname">${n}</div><div>${rows.map(r =>
  `<div class="prow" style="height:${r[0]}px">` + (r.length > 3
    ? `<div class="when"><span data-w="${r[1]}">${r[2]}</span></div><div class="what"><span data-w="${r[3]}">${r[4]}</span></div>`
    : `<div><span data-w="${r[1]}">${r[2]}</span></div>`) + '</div>').join('')}</div></div>`).join('');

// Sheet rows; prefixes: ! red, * bold red, ~ alternate font, > spills over, # patched cell
const rows = `16||적정값|2022-04-19|2020-07-24|2018-01-01|2016-03-08
16|||가야내과|가야내과|가야내과|가야내과
16|키||163,5|163,4|164|165
19|몸무게|~61|~67.5|66,3|68|64
19|체질량지수|~18.5-25|~25.4|24,8|25,3|23,5
15|허리둘레|90미만|91,3|88,7|93|79
16|눈 왼쪽||0,9|1,2|1,2|1,2
19|눈 오른쪽||~0.6|0,7|1|0,9
16|귀 왼쪽||정상|정상||
15|귀 오른쪽||정상|정상||
20|혈압 수축기|120-139|~119|142|125|129
19|혈압 이완기|80-89|~79|85|83|71
15|혈색소|13,0-16,5|15,9|15,6|15,6|14,5
16|공복혈당|70-99|96|88|98|91
16|!총콜레스테롤|!~0-199|!233||!211|#197
16|고밀도|0-60|46||47|47
16|중성지방|0-149|87||100|114
15|!서밀도|!~0-129|!~169||!144|127
16|혈정 크레아티닌|0,7-1,2|0,86|0,8|0,7|0,8
15|신사구체여과율|60-999|102|102|120|104
16|간 AST|0-40|18|18|21|19
16|간 ALT|0-35|13|14|19|18
15|간 감마지이트|11-63|13|17|18|13
16|요단백||경계|정상|정상|정상
16|흉부촬영||이상없음|이상없음|정상|정상
16|!간 초음파||*양종 5cm|*양종 5cm|양종5cm|양종5cm
15|||||위축성위염|위축성위염
16|!위내시경||!장상피 화생성|!장상피 화생성 :|!장상피 화생성 :|!>장상피 화생성 위염
16|||!역류성 식도염|!역류성 식도염|헬리코박터균|역류성 식도염
15|||>장상피화생이란 위에 장과 닮은 조직이 발생하는 것|||
16|대장암||이상없음|이상없음||`.split('\n');
const wide = { '체질량지수': 58, '총콜레스테롤': 69, '신사구체여과율': 81, '혈정 크레아티닌': 83, '간 감마지이트': 73, '120-139': 46, '80-89': 34, '70-99': 33, '0-60': 27, '0-149': 34, '0-40': 27, '0-35': 27, '11-63': 33, '13,0-16,5': 53, '60-999': 41, '0,7-1,2': 41, '장상피 화생성': 72, '장상피 화생성 위염': 100, '장상피 화생성 :': 77, '역류성 식도염': 71, '장상피화생이란 위에 장과 닮은 조직이 발생하는 것': 266, '위축성위염': 57, '혈압 수축기': 61, '혈압 이완기': 61, '헬리코박터균': 70, '양종 5cm': 53 };
sheet.innerHTML = rows.map(line => {
  const [h, ...cells] = line.split('|');
  return `<div class="srow" style="height:${h}px">` + cells.map((t, i) => {
    let k = 'cell';
    for (; '!*~>#'.includes(t[0] || ' ');) { k += { '!': ' hot', '*': ' bold', '~': ' mal', '>': ' spill', '#': ' patch' }[t[0]]; t = t.slice(1); }
    if (i > 1 && /^[\d,.\-]+$/.test(t)) k += ' num';
    const w = /^20\d\d-/.test(t) ? 68 : wide[t];
    const s = k.includes('mal') ? t : t.replace(/-/g, '–');
    return `<div class="${k}"><span${w ? ` data-w="${w}"` : ''}>${s}</span></div>`;
  }).join('') + '</div>';
}).join('');
// Hand-drawn marks, relative to the sheet area
marks.innerHTML = [[780, 437, 83, 21], [964, 436, 54, 21], [1135, 437, 42, 22], [780, 487, 51, 21], [863, 487, 55, 18], [967, 487, 54, 19], [1134, 487, 48, 20], [1231, 484, 38, 23], [776, 611, 88, 53, 'big']]
  .map(([x, y, w, h, k]) => `<i class="${k || ''}" style="left:${x - 780}px;top:${y - 197}px;width:${w}px;height:${h}px"></i>`).join('') +
  '<svg width="16" height="16" viewBox="0 0 14 14"><rect x=".5" y=".5" width="13" height="13" fill="#fff8ee" stroke="#f2b777"/><path d="M2 6 6 4 9 8 6 12Z" fill="#d8d13a" stroke="#666"/><path d="M7 6 12 2" stroke="#345" stroke-width="2.500"/></svg>';

const T = (b, w = 24, h = 24) => S(b, w, h, '0 0 24 24');
apps.innerHTML = [
  T('<path d="M4 4V6H15V4M4 20V18H15V20M4 9H15V15H4ZM19 3V8M19 12V21" fill="none" stroke="#111" stroke-width="1.400"/><path d="M18 9H20V12H18Z"/>'),
  T('<path d="M1 3H9L11 5H23V21H1Z" fill="#ffd05a"/><path d="M1 3H9L11 6H1Z" fill="#e99e1c"/><path d="M5 22V13H19V22H15V17H9V22Z" fill="#3c95dc"/>'),
  T('<path d="M7 2H21L23 5V22L8 23Z" fill="#fff" stroke="#5a9f4a"/><path d="M13 8H21M13 12H21M13 16H21M13 20H21" stroke="#6eb85f" stroke-width="2.200"/><path d="M1 3 14 1V21L1 19Z" fill="#dff2d6" stroke="#388127"/><path d="M4 6 11 17M11 6 4 17" stroke="#206d16" stroke-width="2.600"/>'),
  T('<path d="M8 2 22 4 17 22 2 18Z" fill="url(#np)"/><path d="M22 4 23 19 17 23 2 19 17 21Z" fill="#c8c3b8"/>'),
  T('<path d="M7 3H21L23 5V22L8 23Z" fill="#f7faff" stroke="#6d8dc5"/><path d="M14 9H21M14 12H21M14 15H21M9 19H21" stroke="#6885bd"/><path d="M1 3 14 1V19L1 18Z" fill="#e3edfb" stroke="#4169ae"/><path d="M3 6 5 15 7.500 8 10 15 12 6" fill="none" stroke="#224f9d" stroke-width="2"/>'),
  T('<rect x="1" y="1" width="22" height="22" rx="2" fill="#1679c4"/><rect x="3" y="3" width="18" height="18" fill="#f2f8fd"/><path d="M20 4 14 19" stroke="#2092de" stroke-width="2"/>' + han(4, 5, .85, '#1679c4')),
  T('<path d="M2 16Q0 7 10 4Q21 2 21 10Q20 21 9 21Q4 21 2 16Z" fill="#abd9ef" stroke="#6fa7c5"/><circle cx="6" cy="15" r="2" fill="#e33"/><circle cx="6" cy="10" r="2" fill="#3a3"/><circle cx="11" cy="7" r="2" fill="#f90"/><circle cx="10" cy="16" r="2" fill="#37d"/><path d="M22 2 13 23" stroke="#d88a3f" stroke-width="2.500"/><path d="M22 1 19 7" stroke="#ad6b36" stroke-width="4"/>'),
  T('<path d="M0 0H24V24H0Z" fill="#fae100"/><ellipse cx="12" cy="11" rx="9.500" ry="7.500" fill="#3b1e1e"/><path d="M6 15V21L12 17Z" fill="#3b1e1e"/><text x="5" y="13.500" font-size="6.500" font-family="Roboto" font-weight="900" fill="#fae100" textLength="14">TALK</text>'),
  S(cloud4k, 24, 24, '0 -3 48 48'),
  T('<circle cx="12" cy="12" r="11" fill="#db4437"/><path d="M2.500 6.500A11 11 0 0 0 12 23L17 14.500H8Z" fill="#109d58"/><path d="M12 23A11 11 0 0 0 21.500 6.500H12L17 14.500Z" fill="#fc3"/><circle cx="12" cy="12" r="5.300" fill="#fff"/><circle cx="12" cy="12" r="4.200" fill="#2b78ee"/>')
].map((s, i) => `<div class="app${i === 3 ? ' on' : ''}">${s}</div>`).join('');

// Spread the letters of a text run to its set width
document.querySelectorAll('[data-w]').forEach(e => {
  const w = +e.dataset.w, n = e.textContent.length;
  if (!w || !n) return;
  e.style.letterSpacing = '0px';
  e.style.letterSpacing = (w - e.getBoundingClientRect().width) / n + 'px';
});
```
